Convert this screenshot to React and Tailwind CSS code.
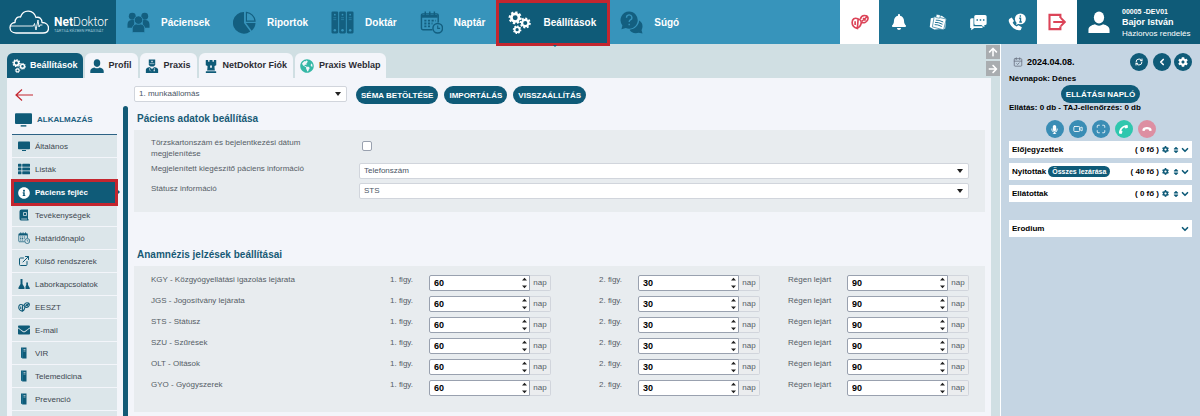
import React, { useState } from 'react';
import {
  FaArrowRight,
  FaArrowUp,
  FaBell,
  FaChessRook,
  FaCog,
  FaEnvelope,
  FaGlobeAmericas,
  FaInfoCircle,
  FaMicrophone,
  FaPhone,
  FaSort,
  FaThList,
} from 'react-icons/fa';
import { CalendarCheck, ChevronDown, ChevronLeft, ExternalLink, Maximize, RefreshCw, Video } from 'lucide-react';

const CloudLogo = () => (
  <svg viewBox="0 0 40 24" className="w-10 h-6 shrink-0" fill="none" stroke="#fff" strokeWidth="1.3" strokeLinejoin="round" strokeLinecap="round">
    <path d="M7 23C3 23 1 20.5 1 17.5C1 14.5 3.5 12.5 6 12.5C6 8.5 8.5 6.5 11.5 7C13 3 16 1 19.5 1.2C23.5 1.5 26 4 27 7.5C30.5 6.5 33 9 33 12.5C37 12.5 39.5 15 39.5 18C39.5 21 37.5 23 34 23Z" />
    <path strokeWidth="0.9" d="M1.5 16H24.5L25.5 13.5L27 20L29 10L30 17L31 15H33" />
  </svg>
);

const Gear = ({ cx, cy, r }) => (
  <g fill="none" stroke="currentColor">
    <circle cx={cx} cy={cy} r={r * 0.62} strokeWidth={r * 0.44} />
    <circle cx={cx} cy={cy} r={r * 0.9} strokeWidth={r * 0.34} pathLength="16" strokeDasharray="1.1 0.9" />
  </g>
);

const GearsIcon = ({ className }) => (
  <svg viewBox="0 0 24 24" className={className}>
    <Gear cx={7.5} cy={7} r={6.4} />
    <Gear cx={18} cy={12.5} r={5.4} />
    <Gear cx={9.5} cy={19.5} r={4.2} />
  </svg>
);

const UsersIcon = ({ className }) => (
  <svg viewBox="0 0 24 24" className={className} fill="currentColor">
    <circle cx="5.5" cy="5.5" r="3.6" />
    <circle cx="18.5" cy="5.5" r="3.6" />
    <path d="M0.5 17.5V14C0.5 11 2.5 9.5 5 9.5H8L7 17.5ZM23.5 17.5V14C23.5 11 21.5 9.5 19 9.5H16L17 17.5Z" />
    <g stroke="#3794bb" strokeWidth="0.8">
      <path d="M5.5 22.5V18.5C5.5 15.5 8 13.5 10 13.5H14C16.5 13.5 18.5 15.5 18.5 18.5V22.5Z" />
      <circle cx="12" cy="9.5" r="4.4" />
    </g>
  </svg>
);

const PieIcon = ({ className }) => (
  <svg viewBox="0 0 24 24" className={className} fill="currentColor">
    <path d="M11.5 1V12.5L18 21.5A11.3 11.3 0 0 1 6 22.3A11.3 11.3 0 0 1 11.5 1Z" />
    <path d="M13.5 12.5H23.5A11 11 0 0 1 19.5 20.5Z" />
    <path d="M14 1.5A10 10 0 0 1 23 10.5H14Z" fill="none" stroke="currentColor" strokeWidth="1.2" />
  </svg>
);

const BindersIcon = ({ className }) => (
  <svg viewBox="0 0 24 24" className={className}>
    {[0.5, 8.5, 16.5].map((x) => (
      <g key={x}>
        <rect x={x} y="0.5" width="7" height="23" rx="1.2" fill="currentColor" />
        <circle cx={x + 3.5} cy="3.8" r="0.9" fill="#3794bb" />
        <path d={`M${x + 2} 7H${x + 5}M${x + 2} 9H${x + 5}`} stroke="#3794bb" strokeWidth="0.6" />
        <circle cx={x + 3.5} cy="20" r="1.3" fill="#3794bb" />
      </g>
    ))}
  </svg>
);

const CalendarIcon = ({ className }) => (
  <svg viewBox="0 0 24 24" className={className} fill="none" stroke="currentColor" strokeWidth="1.5">
    <path d="M13 19.5H3A1.5 1.5 0 0 1 1.5 18V4.5A1.5 1.5 0 0 1 3 3H17.5A1.5 1.5 0 0 1 19 4.5V12" />
    <path strokeWidth="3" d="M2 5.5H18.5" />
    <path d="M5.5 0.5V5M10.2 0.5V5M15 0.5V5" />
    <path strokeWidth="2" strokeDasharray="2.2 1.6" d="M4.5 10H16.5M4.5 13H13M4.5 16H12" />
    <circle cx="18.5" cy="18" r="5" />
    <path strokeWidth="1.2" d="M18.5 15V18.2H21" />
  </svg>
);

const HelpIcon = ({ className }) => (
  <svg viewBox="0 0 24 24" className={className} fill="currentColor">
    <path d="M20 10C22.5 11.5 23.5 13.5 23.5 16C23.5 17.5 23 19 22.5 20L23.5 23.5L19.5 22.8C15 24 11.5 22.5 10 19.5C15.5 19 19.5 15.5 20 10Z" />
    <path d="M9.5 0.5A9 9 0 1 1 6 17.8L1.5 19L2.5 15A9 9 0 0 1 9.5 0.5Z" />
    <path d="M6.8 7A2.8 2.8 0 1 1 10.5 9.5Q9.6 10 9.6 11.5M9.6 13.3V14.8" fill="none" stroke="#3794bb" strokeWidth="1.4" />
  </svg>
);

const PersonIcon = ({ className }) => (
  <svg viewBox="0 0 24 24" className={className} fill="currentColor">
    <ellipse cx="12" cy="7" rx="5.6" ry="6.5" />
    <path d="M0.5 24V20.5C0.5 17.5 3.5 15.5 7.5 14.5Q12 17.5 16.5 14.5C20.5 15.5 23.5 17.5 23.5 20.5V24Z" />
  </svg>
);

const DoctorIcon = ({ className }) => (
  <svg viewBox="0 0 24 24" className={className} fill="currentColor">
    <path d="M6.5 1H17.5V9Q17 13 12 13Q7 13 6.5 9Z" />
    <path d="M1.5 24V18Q2 14.5 8 13.5L12 17L16 13.5Q22 14.5 22.5 18V24Z" />
    <path d="M12 2.5V6M10.2 4.2H13.8M8 8H16M8 15V19L10 21M16 15V19" stroke="#f3f5fa" strokeWidth="1" fill="none" />
    <circle cx="15.8" cy="20" r="1.2" fill="#f3f5fa" />
  </svg>
);

const PillsIcon = ({ className }) => (
  <svg viewBox="0 0 24 24" className={className} fill="none" stroke="currentColor" strokeWidth="2.2">
    <path d="M9.5 8C5 5.5 1.5 8 1.5 12.5C1.5 17 5 19.5 8.5 20.5L9.5 8ZM9.5 8C13.5 8.5 14.5 12 13 15.5C12 18.5 10.5 19.5 8.5 20.5" />
    <path d="M5.5 11V16" />
    <path d="M12.5 8C13.5 4.5 16 3 19 3.5C22.5 3.5 23.5 6.5 22 9.5C20.5 12.5 17 13.5 14.5 12.5M14.5 11L22 4.5M16 7L19.5 10" />
  </svg>
);

const NotesIcon = ({ className }) => (
  <svg viewBox="0 0 24 24" className={className}>
    <path d="M2.5 7L17 3.5L23 8L21.5 21L7 22L1 18.5Z" fill="currentColor" />
    <path d="M7 4.5L23 8L19.5 22.5L4.5 18.5Z" fill="currentColor" stroke="#1d7293" strokeWidth="0.9" />
    <path d="M10 1.5L15.5 3L14 7L9 6Z" fill="currentColor" stroke="#1d7293" strokeWidth="0.8" />
    <path d="M9 9.5Q13 9 19 12M8 12.5Q12 12 18 15M7.5 15.5Q11 15 17 18" stroke="#1d7293" strokeWidth="1.3" fill="none" />
  </svg>
);

const ChatIcon = ({ className }) => (
  <svg viewBox="0 0 24 24" className={className} fill="currentColor">
    <path d="M3.5 7H6V17.5H18V20H7L3 23V20H1.5V9Q1.5 7 3.5 7Z" />
    <path d="M9 2.5H21.5Q23.5 2.5 23.5 4.5V14Q23.5 16 21.5 16H20.5V19L16.5 16H9Q7 16 7 14V4.5Q7 2.5 9 2.5Z" />
    <path d="M10 9.3H12M14.3 9.3H16.3M18.6 9.3H20.6" stroke="#1d7293" strokeWidth="2" />
  </svg>
);

const PhoneInfoIcon = ({ className }) => (
  <svg viewBox="0 0 24 24" className={className} fill="currentColor">
    <path d="M2 7.5L5 6L8 10.5L6.2 13Q8 16.5 11.5 18L13.8 16.2L18.5 19L17 22.5Q14.5 24 10.5 22Q3.5 18.5 1.2 11.5Q0.5 9 2 7.5Z" />
    <circle cx="16.5" cy="7.8" r="7.3" />
    <path d="M12 12L10.5 16L15 14Z" />
    <path d="M16.5 3V5M15 7H16.7V12M15 12H18.5" stroke="#1d7293" strokeWidth="1.8" fill="none" />
  </svg>
);

const LogoutIcon = ({ className }) => (
  <svg viewBox="0 0 24 24" className={className} fill="none" stroke="currentColor" strokeWidth="2.8">
    <path d="M16.5 6.5V2.5H2V21.5H16.5V17.5" />
    <path d="M7 12H22M17 6.5L22.5 12L17 17.5" />
  </svg>
);

const MonitorIcon = ({ className }) => (
  <svg viewBox="0 0 24 24" className={className} fill="currentColor">
    <rect x="0" y="3" width="24" height="15.5" rx="1.5" />
    <path d="M8 20H16V22H8Z" />
  </svg>
);

const BookIcon = ({ className }) => (
  <svg viewBox="0 0 24 24" className={className}>
    <path d="M7 1H20V20H21V23H6Q3 23 3 19V5Q3 1 7 1Z" fill="currentColor" />
    <path d="M11 7H17V13H11ZM6.5 20H18" stroke="#dce6ea" strokeWidth="1.5" fill="none" />
  </svg>
);

const FlasksIcon = ({ className }) => (
  <svg viewBox="0 0 24 24" className={className} fill="currentColor">
    <path d="M5 2H9V12L13 19V22H1V19L5 12Z" />
    <path d="M16.5 9H20V14L23.5 20V22H15V17L16.5 14Z" />
  </svg>
);

const BinderIcon = ({ className }) => (
  <svg viewBox="0 0 24 24" className={className}>
    <path d="M6 1H17V23H9L6 21Z" fill="currentColor" />
    <path d="M11 5H15M11 8H15" stroke="#dce6ea" strokeWidth="1.3" />
    <path d="M8.5 2V22" stroke="#3794bb" strokeWidth="1" />
  </svg>
);

const menuItems = [
  { label: 'Páciensek', icon: UsersIcon },
  { label: 'Riportok', icon: PieIcon },
  { label: 'Doktár', icon: BindersIcon },
  { label: 'Naptár', icon: CalendarIcon },
  { label: 'Beállítások', icon: GearsIcon, active: true },
  { label: 'Súgó', icon: HelpIcon },
];

const tabs = [
  { label: 'Beállítások', icon: GearsIcon, color: 'text-white', active: true },
  { label: 'Profil', icon: PersonIcon, color: 'text-[#0f5b78]' },
  { label: 'Praxis', icon: DoctorIcon, color: 'text-[#0f5b78]' },
  { label: 'NetDoktor Fiók', icon: FaChessRook, color: 'text-[#0f5b78]' },
  { label: 'Praxis Weblap', icon: FaGlobeAmericas, color: 'text-[#35b8a6]' },
];

const sideItems = [
  { label: 'Általános', icon: MonitorIcon },
  { label: 'Listák', icon: FaThList },
  { label: 'Páciens fejléc', icon: FaInfoCircle, active: true },
  { label: 'Tevékenységek', icon: BookIcon },
  { label: 'Határidőnapló', icon: CalendarIcon },
  { label: 'Külső rendszerek', icon: ExternalLink },
  { label: 'Laborkapcsolatok', icon: FlasksIcon },
  { label: 'EESZT', icon: PillsIcon },
  { label: 'E-mail', icon: FaEnvelope },
  { label: 'VIR', icon: BinderIcon },
  { label: 'Telemedicina', icon: BinderIcon },
  { label: 'Prevenció', icon: BinderIcon },
];

const warnings = [
  { id: 'kgy', label: 'KGY - Közgyógyellátási igazolás lejárata' },
  { id: 'jgs', label: 'JGS - Jogosítvány lejárata' },
  { id: 'sts', label: 'STS - Státusz' },
  { id: 'szu', label: 'SZU - Szűrések' },
  { id: 'olt', label: 'OLT - Oltások' },
  { id: 'gyo', label: 'GYO - Gyógyszerek' },
];

const patientLists = [
  { label: 'Előjegyzettek', count: '( 0 fő )' },
  { label: 'Nyitottak', count: '( 40 fő )', closeAll: true },
  { label: 'Ellátottak', count: '( 0 fő )' },
];

const SelectBox = ({ id, label, options }) => (
  <div className="relative w-full">
    <select
      id={id}
      aria-label={label}
      className="block w-full h-4 px-1 leading-3 text-gray-600 bg-white border border-gray-300 rounded-xs appearance-none"
    >
      {options.map((option) => (
        <option key={option}>{option}</option>
      ))}
    </select>
    <svg viewBox="0 0 6 4" className="absolute w-[6px] h-1 pointer-events-none right-[6px] top-[6px]" fill="#222">
      <path d="M0 0H6L3 4Z" />
    </svg>
  </div>
);

const DayField = ({ id, label, initial, wide }) => {
  const [value, setValue] = useState(initial);

  return (
    <div className={wide ? 'flex pl-7' : 'flex pl-12'}>
      <label htmlFor={id} className={wide ? 'w-[59px] shrink-0' : 'w-[39px] shrink-0'}>
        {label}
      </label>
      <div className="relative flex-1 min-w-0">
        <input
          id={id}
          type="number"
          value={value}
          onChange={(e) => setValue(e.target.value)}
          className="block w-full h-4 px-1 text-[9px] leading-3 font-bold text-black bg-white border border-gray-400 rounded-l-xs [appearance:textfield] [&::-webkit-inner-spin-button]:appearance-none"
        />
        <svg viewBox="0 0 5 12" className="absolute w-[5px] h-3 pointer-events-none right-[3px] top-[2px]" fill="#222">
          <path d="M0 3.5L2.5 0.8L5 3.5ZM0 8.5H5L2.5 11.2Z" />
        </svg>
      </div>
      <span className="w-[21px] h-4 leading-[14px] text-center bg-[#ebedef] border border-l-0 border-gray-300 rounded-r-xs">
        nap
      </span>
    </div>
  );
};

const PillButton = ({ children }) => (
  <button className="h-[18px] px-[5px] rounded-full bg-[#0f5b78] text-white font-bold whitespace-nowrap">
    {children}
  </button>
);

const RoundButton = ({ label, className, children }) => (
  <button aria-label={label} className={`flex items-center justify-center w-[18px] h-[18px] rounded-full text-white ${className}`}>
    {children}
  </button>
);

const Header = () => (
  <header className="relative z-10 flex h-11 bg-[#3794bb] text-white shrink-0">
    <div className="flex items-center gap-[5px] w-[116px] pl-[9px] bg-[#0f5b78] shrink-0">
      <CloudLogo />
      <div className="pt-[6px] font-[Roboto]">
        <p className="text-[12px] leading-3">
          <span className="font-bold">Net</span>
          <span className="font-light">Doktor</span>
        </p>
        <p className="text-[4px] leading-[6px] whitespace-nowrap text-[#9cc5d6]">TARTSA KÉZBEN PRAXISÁT</p>
      </div>
    </div>

    <nav className="flex flex-1">
      {menuItems.map(({ label, icon: Icon, active }) => (
        <a
          key={label}
          href="#"
          className={
            active
              ? 'relative flex items-center gap-3 h-[46px] pl-[9px] pr-[11px] -mx-px pb-px border-3 border-[#c4262f] bg-[#0f5b78] text-[10px] font-bold'
              : 'flex items-center gap-[11px] pl-[11px] pr-3 text-[10px] font-bold'
          }
        >
          <Icon className={active ? 'w-[23px] h-[23px]' : 'w-[23px] h-[23px] text-[#135f80]'} />
          {label}
          {active && (
            <svg viewBox="0 0 4 2" className="absolute w-1 h-[2px] left-1/2 top-full mt-[2px]" fill="#0f5b78">
              <path d="M0 0H4L2 2Z" />
            </svg>
          )}
        </a>
      ))}
    </nav>

    <button aria-label="EESZT" className="flex items-center justify-center w-[39px] bg-white text-[#dc4458]">
      <PillsIcon className="w-[18px] h-[18px]" />
    </button>
    <div className="grid grid-cols-4 w-[158px] bg-[#1d7293]">
      <button aria-label="Értesítések" className="flex items-center justify-center">
        <FaBell className="w-4 h-4" />
      </button>
      <button aria-label="Jegyzetek" className="flex items-center justify-center">
        <NotesIcon className="w-[18px] h-[18px]" />
      </button>
      <button aria-label="Üzenetek" className="flex items-center justify-center">
        <ChatIcon className="w-[18px] h-[18px]" />
      </button>
      <button aria-label="Ügyfélszolgálat" className="flex items-center justify-center">
        <PhoneInfoIcon className="w-[18px] h-[18px]" />
      </button>
    </div>
    <button aria-label="Kilépés" className="flex items-center justify-center w-10 bg-white text-[#dc4458]">
      <LogoutIcon className="w-[18px] h-[18px]" />
    </button>
    <div className="flex items-center gap-3 w-[123px] pl-[11px] bg-[#0f5b78]">
      <PersonIcon className="w-[22px] h-[22px]" />
      <div className="whitespace-nowrap">
        <p className="text-[7px] leading-[11px] font-bold">00005 -DEV01</p>
        <p className="text-[9px] leading-[11px] font-bold">Bajor István</p>
        <p className="leading-[11px]">Háziorvos rendelés</p>
      </div>
    </div>
  </header>
);

const TabBar = () => (
  <div className="flex h-[34px] items-end justify-between">
    <div className="flex gap-[2px] h-[25px]">
      {tabs.map(({ label, icon: Icon, color, active }) => (
        <a
          key={label}
          href="#"
          className={
            active
              ? 'flex items-center gap-1 px-[5px] rounded-t-md bg-[#0f5b78] text-white text-[9px] font-bold'
              : 'flex items-center gap-[5px] pl-[5px] pr-[6px] rounded-t-md bg-[#f3f5fa] text-[#2b2b33] text-[9px] font-bold'
          }
        >
          <Icon className={`w-[14px] h-[14px] ${color}`} />
          {label}
        </a>
      ))}
    </div>
    <div className="flex flex-col gap-[2px] h-[33px] w-[14px] shrink-0 text-white">
      <button aria-label="Fel" className="flex items-center justify-center h-[14px] bg-[#a9adb0]">
        <FaArrowUp className="w-[10px] h-[10px]" />
      </button>
      <button aria-label="Jobbra" className="flex items-center justify-center h-[15px] bg-[#a9adb0]">
        <FaArrowRight className="w-[10px] h-[10px]" />
      </button>
    </div>
  </div>
);

const SideMenu = () => (
  <aside className="flex flex-col w-[105px] shrink-0">
    <a href="#" aria-label="Vissza" className="flex items-center h-[33px] pl-[3px] text-[#c4262f]">
      <svg viewBox="0 0 18 12" className="w-[18px] h-3" fill="none" stroke="currentColor" strokeWidth="1.2">
        <path d="M18 6H1M7 0.5L1 6L7 11.5" />
      </svg>
    </a>
    <h2 className="flex items-center gap-[5px] h-6 pl-[3px] pb-[6px] border-b border-[#2c6285] text-[#21607f] font-bold">
      <MonitorIcon className="w-[17px] h-[17px] text-[#0f5b78]" />
      ALKALMAZÁS
    </h2>
    <nav className="flex flex-col flex-1 bg-[#dce6ea]">
      {sideItems.map(({ label, icon: Icon, active }) => (
        <a
          key={label}
          href="#"
          className={
            active
              ? 'relative z-10 flex items-center gap-[5px] h-[27px] -mx-px -my-[2px] px-1 border-3 border-[#c4262f] bg-[#0f5b78] text-white font-bold shrink-0'
              : 'flex items-center gap-[5px] h-[23px] px-[6px] border-b border-[#f3f5fa] text-[#3c4650] shrink-0'
          }
        >
          <Icon className={active ? 'w-3 h-3' : 'w-3 h-3 text-[#0f5b78]'} />
          {label}
          {active && (
            <svg viewBox="0 0 2 4" className="absolute w-[2px] h-1 left-full top-2 ml-[3px]" fill="#0f5b78">
              <path d="M0 0L2 2L0 4Z" />
            </svg>
          )}
        </a>
      ))}
    </nav>
  </aside>
);

const SettingsForm = () => (
  <main className="flex-1 min-w-0 pl-[6px] pr-[6px] pt-2 text-[#555d66]">
    <div className="flex items-start gap-[6px]">
      <div className="w-[213px] mr-[3px]">
        <SelectBox id="workstation" label="Munkaállomás" options={['1. munkaállomás']} />
      </div>
      <PillButton>SÉMA BETÖLTÉSE</PillButton>
      <PillButton>IMPORTÁLÁS</PillButton>
      <PillButton>VISSZAÁLLÍTÁS</PillButton>
    </div>

    <h3 className="pl-[3px] mt-2 mb-1 text-[10px] leading-[14px] font-bold text-[#175a75]">Páciens adatok beállítása</h3>
    <section className="grid grid-cols-[208px_1fr] gap-y-1 pl-[17px] pr-4 pt-[7px] pb-[13px] bg-[#e8ecef] leading-[11px]">
      <label htmlFor="card-number" className="pr-8">
        Törzskartonszám és bejelentkezési dátum megjelenítése
      </label>
      <div className="pl-[3px] pt-1">
        <input
          id="card-number"
          type="checkbox"
          className="block w-[10px] h-[10px] bg-white border border-gray-400 rounded-xs appearance-none checked:bg-[#0f5b78]"
        />
      </div>
      <label htmlFor="extra-info">Megjelenített kiegészítő páciens információ</label>
      <SelectBox id="extra-info" options={['Telefonszám']} />
      <label htmlFor="status-info">Státusz információ</label>
      <SelectBox id="status-info" options={['STS']} />
    </section>

    <h3 className="pl-[3px] mt-9 mb-1 text-[10px] leading-[14px] font-bold text-[#175a75]">Anamnézis jelzések beállításai</h3>
    <section className="flex flex-col gap-[5px] pl-[17px] pr-4 pt-[9px] pb-4 bg-[#e8ecef] leading-[9px]">
      {warnings.map((warning) => (
        <div key={warning.id} className="grid grid-cols-[191fr_209fr_209fr_209fr]">
          <span className="whitespace-nowrap">{warning.label}</span>
          <DayField id={`${warning.id}-first`} label="1. figy." initial="60" />
          <DayField id={`${warning.id}-second`} label="2. figy." initial="30" />
          <DayField id={`${warning.id}-expired`} label="Régen lejárt" initial="90" wide />
        </div>
      ))}
    </section>
  </main>
);

const DailyPanel = () => (
  <aside className="w-[200px] shrink-0 pl-2 pr-2 pt-[9px] border-l border-white bg-[#c5d5e3] text-black font-bold">
    <div className="flex items-center h-[18px] pl-1">
      <CalendarCheck className="w-[10px] h-[10px] mr-1 text-gray-500" />
      <span className="flex-1 text-[9px]">2024.04.08.</span>
      <RoundButton label="Frissítés" className="mr-[5px] bg-[#0f5b78]">
        <RefreshCw className="w-2 h-2" strokeWidth={3} />
      </RoundButton>
      <RoundButton label="Előző nap" className="mr-[3px] bg-[#0f5b78]">
        <ChevronLeft className="w-[10px] h-[10px]" strokeWidth={4} />
      </RoundButton>
      <RoundButton label="Beállítások" className="bg-[#0f5b78]">
        <FaCog className="w-[10px] h-[10px]" />
      </RoundButton>
    </div>
    <p className="mt-[2px] leading-3">Névnapok: Dénes</p>
    <div className="flex justify-center">
      <PillButton>ELLÁTÁSI NAPLÓ</PillButton>
    </div>
    <p className="relative -mt-px leading-3">Ellátás: 0 db - TAJ-ellenőrzés: 0 db</p>
    <div className="flex justify-center gap-[5px] mt-[6px]">
      <RoundButton label="Mikrofon" className="bg-[#3a8db5]">
        <FaMicrophone className="w-[9px] h-[9px]" />
      </RoundButton>
      <RoundButton label="Kamera" className="bg-[#3a8db5]">
        <Video className="w-[10px] h-[10px]" />
      </RoundButton>
      <RoundButton label="Teljes képernyő" className="bg-[#3a8db5]">
        <Maximize className="w-[10px] h-[10px]" />
      </RoundButton>
      <RoundButton label="Hívás" className="bg-[#2fc7ae]">
        <FaPhone className="w-[9px] h-[9px] -scale-x-100 rotate-90" />
      </RoundButton>
      <RoundButton label="Hívás bontása" className="bg-[#dd8fa2]">
        <svg viewBox="0 0 12 8" className="w-[10px] h-2" fill="currentColor">
          <path d="M0.5 5Q0.5 3.5 2 2.5Q6 0.5 10 2.5Q11.5 3.5 11.5 5V6L9 6.5L8 4.5Q6 3.8 4 4.5L3 6.5L0.5 6Z" />
        </svg>
      </RoundButton>
    </div>

    <div className="flex flex-col gap-[5px] mt-[3px]">
      {patientLists.map((list) => (
        <div key={list.label} className="flex items-center h-[17px] px-[3px] bg-white">
          {list.label}
          {list.closeAll && (
            <button className="h-[11px] ml-[2px] px-1 rounded-full bg-[#0f5b78] text-white text-[7px] leading-[11px]">
              Összes lezárása
            </button>
          )}
          <span className="ml-auto">{list.count}</span>
          <FaCog className="w-[7px] h-[7px] ml-[3px] text-[#0f5b78]" />
          <FaSort className="w-2 h-2 ml-[3px] text-[#0f5b78]" />
          <ChevronDown className="w-[10px] h-[10px] -mr-px text-[#0f5b78]" strokeWidth={4} />
        </div>
      ))}
    </div>
    <div className="flex items-center justify-between h-[17px] px-[3px] mt-[18px] bg-white">
      Erodium
      <ChevronDown className="w-[10px] h-[10px] -mr-px text-[#0f5b78]" strokeWidth={4} />
    </div>
  </aside>
);

const App = () => {
  return (
    <div className="flex flex-col h-screen overflow-hidden bg-[#d0dfe3] font-['Liberation_Sans',Arial,sans-serif] text-[8px] leading-[11px]">
      <Header />
      <div className="flex flex-1 min-h-0">
        <div className="flex flex-col flex-1 min-w-0 pl-[7px]">
          <TabBar />
          <div className="flex flex-1 min-h-0 mr-[9px] pl-[5px] bg-[#f3f5fa]">
            <SideMenu />
            <div className="w-[5px] mt-7 ml-[6px] rounded-t-full bg-[#125a76] shrink-0" />
            <SettingsForm />
          </div>
        </div>
        <DailyPanel />
      </div>
    </div>
  );
};

export default App;
